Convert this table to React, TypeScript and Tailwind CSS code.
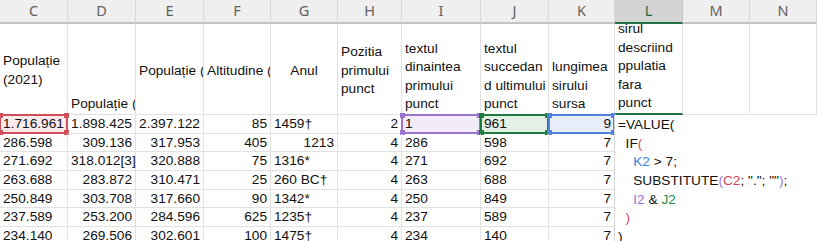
import React from "react";

type Al = "l" | "r";

const letters = ["C", "D", "E", "F", "G", "H", "I", "J", "K", "L", "M", "N"];

const rows: string[][] = [
  ["1.716.961", "1.898.425", "2.397.122", "85", "1459†", "2", "1", "961", "9"],
  ["286.598", "309.136", "317.953", "405", "1213", "4", "286", "598", "7"],
  ["271.692", "318.012[3]", "320.888", "75", "1316*", "4", "271", "692", "7"],
  ["263.688", "283.872", "310.471", "25", "260 BC†", "4", "263", "688", "7"],
  ["250.849", "303.708", "317.660", "90", "1342*", "4", "250", "849", "7"],
  ["237.589", "253.200", "284.596", "625", "1235†", "4", "237", "589", "7"],
  ["234.140", "269.506", "302.601", "100", "1475†", "4", "234", "140", "7"],
];

function align(col: number, v: string): Al {
  if (col === 0) return "l";
  if (col === 1) return v === "318.012[3]" ? "l" : "r";
  if (col === 4) return v === "1213" ? "r" : "l";
  if (col === 6 || col === 7) return "l";
  return "r";
}

const boxes: Record<number, { border: string; fill: string; corner: string }> = {
  0: { border: "border-[#d0505a]", fill: "bg-[#fbe9eb]", corner: "bg-[#d0505a]" },
  6: { border: "border-[#9a74cf]", fill: "bg-[#f1ecf7]", corner: "bg-[#9a74cf]" },
  7: { border: "border-[#1f7d3f]", fill: "bg-[#e4f0e7]", corner: "bg-[#1f7d3f]" },
  8: { border: "border-[#4f82d8]", fill: "bg-[#e7eef9]", corner: "bg-[#4f82d8]" },
};

function RefBox({ col }: { col: number }) {
  const b = boxes[col];
  return (
    <div className={`absolute -top-[1px] -left-[1px] -right-[1px] -bottom-[1px] border-2 ${b.border} ${b.fill}`}>
      <div className={`absolute -top-[3px] -left-[3px] w-[5px] h-[5px] ${b.corner}`} />
      <div className={`absolute -top-[3px] -right-[3px] w-[5px] h-[5px] ${b.corner}`} />
      <div className={`absolute -bottom-[3px] -left-[3px] w-[5px] h-[5px] ${b.corner}`} />
      <div className={`absolute -bottom-[3px] -right-[3px] w-[5px] h-[5px] ${b.corner}`} />
    </div>
  );
}

function HeadCell({
  lines,
  v,
  center,
  extra,
}: {
  lines: string[];
  v: "c" | "e";
  center?: boolean;
  extra?: string;
}) {
  return (
    <div
      className={`flex flex-col ${v === "c" ? "justify-center pt-[4px]" : "justify-end"} ${
        center ? "items-center" : "items-start"
      } px-[3px] overflow-hidden border-r border-b border-[#e1e1e1] ${extra ?? ""}`}
    >
      {lines.map((l, i) => (
        <div key={i} className="leading-[18.6px] whitespace-nowrap">
          {l}
        </div>
      ))}
    </div>
  );
}

const formulaLines: React.ReactNode[] = [
  <>=VALUE(</>,
  <>
    {"  IF"}
    <span className="text-[#d64f5d]">(</span>
  </>,
  <>
    {"    "}
    <span className="text-[#3f7fdc]">K2</span>
    {" > 7;"}
  </>,
  <>
    {"    SUBSTITUTE"}
    <span className="text-[#a276d6]">(</span>
    <span className="text-[#d04a55]">C2</span>
    {'; "."; ""'}
    <span className="text-[#a276d6]">)</span>
    {";"}
  </>,
  <>
    {"    "}
    <span className="text-[#a070d8]">I2</span>
    {" & "}
    <span className="text-[#2a8a4a]">J2</span>
  </>,
  <>
    {"  "}
    <span className="text-[#d64f5d]">)</span>
  </>,
  <>)</>,
];

export default function App() {
  return (
    <div
      className="w-[817px] h-[241px] overflow-hidden bg-white text-[13.7px] text-[#111]"
      style={{ fontFamily: '"Liberation Sans", Arial, sans-serif' }}
    >
      <div className="grid grid-cols-[68px_68px_68px_67px_67px_64px_79px_68px_66px_68px_67px_67px] grid-rows-[24px_91px_repeat(7,18.7px)]">
        {/* column letters */}
        {letters.map((l) => {
          const sel = l === "L";
          return (
            <div
              key={l}
              className={`flex items-center justify-center border-r border-b-2 text-[14.5px] ${
                sel
                  ? "bg-[#d3d3d3] border-r-[#c4c4c4] border-b-[#217346] text-[#1d6b3f]"
                  : "bg-[#efefef] border-r-[#d7d7d7] border-b-[#c3c3c3] text-[#616161]"
              }`}
              style={{ fontFamily: '"Noto Sans", "Open Sans", sans-serif' }}
            >
              {l}
            </div>
          );
        })}

        {/* header row 1 */}
        <HeadCell lines={["Populație", "(2021)"]} v="c" />
        <HeadCell lines={["Populație ("]} v="e" />
        <HeadCell lines={["Populație ("]} v="c" />
        <HeadCell lines={["Altitudine ("]} v="c" />
        <HeadCell lines={["Anul"]} v="c" center />
        <HeadCell lines={["Pozitia", "primului", "punct"]} v="c" />
        <HeadCell lines={["textul", "dinaintea", "primului", "punct"]} v="e" />
        <HeadCell lines={["textul", "succedan", "d ultimului", "punct"]} v="e" />
        <HeadCell lines={["lungimea", "sirului", "sursa"]} v="e" />
        <HeadCell lines={["sirul", "descriind", "ppulatia", "fara", "punct"]} v="e" extra="border-b-2 border-b-[#217346]" />
        <HeadCell lines={[]} v="e" />
        <HeadCell lines={[]} v="e" />

        {/* data rows */}
        {rows.map((r, ri) => (
          <React.Fragment key={ri}>
            {r.map((v, ci) => {
              const a = align(ci, v);
              return (
                <div
                  key={ci}
                  className={`relative flex items-center px-[3px] border-r border-b border-[#e1e1e1] whitespace-nowrap ${
                    a === "r" ? "justify-end" : "justify-start"
                  }`}
                >
                  {ri === 0 && boxes[ci] ? <RefBox col={ci} /> : null}
                  <span className="relative leading-[18.7px] pt-[1px]">{v}</span>
                </div>
              );
            })}
            {/* L column: holds the in-cell formula editor on the first data row */}
            <div className="relative border-r border-b border-[#e1e1e1]">
              {ri === 0 ? (
                <div className="absolute top-0 -left-[1px] w-[203px] h-[140px] bg-white border-l border-[#d6d6d6] z-10 pl-[3px] pt-[1px]">
                  {formulaLines.map((ln, i) => (
                    <div key={i} className="h-[18.7px] leading-[18.7px] whitespace-pre">
                      {ln}
                    </div>
                  ))}
                </div>
              ) : null}
            </div>
            <div className="border-r border-b border-[#e1e1e1]" />
            <div className="border-r border-b border-[#e1e1e1]" />
          </React.Fragment>
        ))}
      </div>
    </div>
  );
}
